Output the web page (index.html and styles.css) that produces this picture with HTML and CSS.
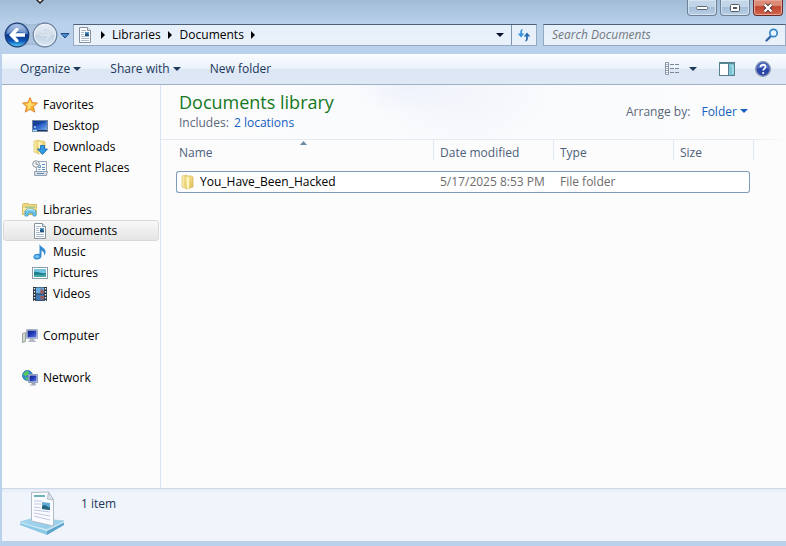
FILE: index.html
```
<!DOCTYPE html>
<html lang="en">
<head>
<meta charset="utf-8">
<title>Documents</title>
<link rel="stylesheet" href="styles.css">
</head>
<body>
<svg class="defs" aria-hidden="true">
  <defs>
    <linearGradient id="gold" x1="0" y1="0" x2="1" y2="1"><stop offset="0" stop-color="#fff3ad"/><stop offset="1" stop-color="#dfb950"/></linearGradient>
    <linearGradient id="screen" x1="0" y1="0" x2="1" y2="1"><stop offset="0" stop-color="#1c3f9e"/><stop offset=".5" stop-color="#2f62c8"/><stop offset="1" stop-color="#8fbdf0"/></linearGradient>
    <linearGradient id="dark" x1="0" y1="0" x2="1" y2="1"><stop offset="0" stop-color="#0c2c80"/><stop offset=".45" stop-color="#2036b4"/><stop offset="1" stop-color="#5f7fe0"/></linearGradient>
    <linearGradient id="orb" x1="0" y1="0" x2="0" y2="1"><stop offset="0" stop-color="#a9c4e6"/><stop offset=".45" stop-color="#2f62b4"/><stop offset=".5" stop-color="#0a3588"/><stop offset=".75" stop-color="#0f56b8"/><stop offset="1" stop-color="#55d4fa"/></linearGradient>
    <linearGradient id="orb-off" x1="0" y1="0" x2="0" y2="1"><stop offset="0" stop-color="#e6edf5"/><stop offset=".48" stop-color="#d3dfec"/><stop offset=".52" stop-color="#c2d2e4"/><stop offset="1" stop-color="#dbe7f4"/></linearGradient>
    <linearGradient id="tray" x1="0" y1="0" x2="1" y2="1"><stop offset="0" stop-color="#a5d8ef"/><stop offset="1" stop-color="#8fcbe8"/></linearGradient>
    <symbol id="doc" viewBox="0 0 16 16">
      <path d="M2.5.5h8l3 3v12h-11z" fill="#fff" stroke="#8792a0"/>
      <path d="M10.500.500v3h3" fill="#e6edf3" stroke="#8792a0"/>
      <path d="M4 3.500h5M4 5.500h3M4 7.500h3M4 9.500h8M4 11.500h8M4 13.500h8" stroke="#a9bbcf"/>
      <path d="M8 5h4v4H8z" fill="#5a9acb"/><path d="M8 7l2-1 2 2v1H8z" fill="#1f5585"/>
    </symbol>
    <symbol id="folder" viewBox="0 0 16 16">
      <path d="M2 2l5-1v14l-5-2z" fill="#f9eaa0" stroke="#e0c878" stroke-width=".8"/>
      <path d="M5 2h6l2 1v10l-6 2-2-2z" fill="url(#gold)" stroke="#dabb62" stroke-width=".8"/>
      <path d="M7 3v12l2-1V4z" fill="#fff6c4"/>
    </symbol>
  </defs>
</svg>

<div class="window">
  <header class="frame">
    <svg class="cursor" width="10" height="5" viewBox="0 0 10 5" aria-hidden="true"><path d="M1-1l4 4 4-4" fill="#fff" stroke="#222" stroke-width="1.5"/></svg>
    <div class="caption">
      <button class="cap" aria-label="Minimize"><svg width="12" height="6" viewBox="0 0 12 6"><rect x=".5" y="1.500" width="11" height="3" rx="1" fill="#fff" stroke="#5a6673"/></svg></button>
      <button class="cap" aria-label="Maximize"><svg width="12" height="10" viewBox="0 0 12 10"><rect x="1.500" y="1.500" width="9" height="7" rx="1" fill="#fff" stroke="#4e5965"/><rect x="4.500" y="4.500" width="3" height="1" fill="#9db3ca" stroke="#4e5965"/></svg></button>
      <button class="cap close" aria-label="Close"><svg width="12" height="10" viewBox="0 0 12 10"><path d="M2.500 1.500l7 7M9.500 1.500l-7 7" stroke="#5c3030" stroke-width="4"/><path d="M2.500 1.500l7 7M9.500 1.500l-7 7" stroke="#fff" stroke-width="2.400"/></svg></button>
    </div>
    <nav class="navbar" aria-label="Address">
      <div class="travel">
        <svg class="track" width="54" height="26" viewBox="0 0 54 26" aria-hidden="true"><path d="M12 1c9 0 9 2 15 2s8-2 14-2a12 12 0 0 1 0 24c-7 0-8-3-14-3s-8 3-15 3z" fill="#abc3de" stroke="#98b1cd"/></svg>
        <button aria-label="Back"><svg width="26" height="26" viewBox="0 0 26 26"><circle cx="13" cy="13" r="11.800" fill="url(#orb)" stroke="#1c3d73" stroke-width="1.200"/><path d="M3 12a10 9 0 0 1 20 0c-6-3-14-3-20 0z" fill="#fff" opacity=".25"/><path d="M5 13l7-7h2.500v2L11.500 11.200H21v3.600h-9.500l3 3.200v2H12z" fill="#fff"/></svg></button>
        <button aria-label="Forward" disabled><svg width="26" height="26" viewBox="0 0 26 26"><circle cx="13" cy="13" r="11.800" fill="url(#orb-off)" stroke="#6f839e" stroke-width="1.200"/><circle cx="13" cy="13" r="10.500" fill="none" stroke="#edf4fb"/><path d="M20 13l-6-6-2 1 3 3.500H7v3h8L12 18l2 1z" fill="#d8e3ef" stroke="#c3d2e3" stroke-width=".7"/></svg></button>
        <button aria-label="Recent pages"><svg width="10" height="7" viewBox="0 0 10 7"><path d="M1 1.500h8L5 6z" fill="#4d8ed0" stroke="#1d4a80"/></svg></button>
      </div>
      <div class="address">
        <svg width="16" height="16" aria-hidden="true"><use href="#doc"/></svg>
        <button class="sep" aria-label="Root"><i class="right"></i></button>
        <button>Libraries</button>
        <button class="sep" aria-label="Libraries menu"><i class="right"></i></button>
        <button>Documents</button>
        <button class="sep" aria-label="Documents menu"><i class="right"></i></button>
        <button class="history" aria-label="Previous locations"><i class="down"></i></button>
        <button class="refresh" aria-label="Refresh"><svg width="14" height="14" viewBox="0 0 14 14"><path d="M6 1C4 1 3 2.500 3.300 5.500H.8L4 9.500l3.300-4H5.200C5 3.500 5 2.500 6 1z" fill="#3793dc"/><path d="M8 13.500c2.300 0 3.300-1.500 2.800-5h2.500L10 4.500l-3.300 4H9c.2 2 .2 3.500-1 5z" fill="#286db4"/></svg></button>
      </div>
      <label class="search">
        <input type="text" placeholder="Search Documents" aria-label="Search Documents">
        <svg width="14" height="14" viewBox="0 0 14 14" aria-hidden="true"><path d="M6.500 7.500L1.500 12.500" stroke="#3666a6" stroke-width="2.400" stroke-linecap="round"/><circle cx="8.500" cy="5" r="3.700" fill="#e8f5ff" stroke="#3787c4" stroke-width="1.700"/></svg>
      </label>
    </nav>
  </header>

  <div class="toolbar">
    <button>Organize <i class="down"></i></button>
    <button>Share with <i class="down"></i></button>
    <button>New folder</button>
    <div class="tools">
      <button aria-label="Change your view"><svg width="16" height="14" viewBox="0 0 16 14"><path d="M1.500.5h3v12h-3zM1.500 4.500h3M1.500 8.500h3" fill="#fff" stroke="#8c96a3"/><path d="M2.500 2.500h1M2.500 6.500h1M2.500 10.500h1" stroke="#4c6bb0"/><path d="M6 2.500h10M6 6.500h10M6 10.500h10" stroke="#7c8794" stroke-dasharray="4 1"/></svg></button>
      <button class="more" aria-label="More options"><i class="down"></i></button>
      <button class="preview" aria-label="Show the preview pane"><svg width="16" height="14" viewBox="0 0 16 14"><rect x=".5" y=".5" width="15" height="13" fill="#fff" stroke="#55808f"/><path d="M1 1.500h14" stroke="#5a8796"/><path d="M10 2h5v11h-5z" fill="#7fc4d4"/><path d="M9.500 2v11" stroke="#55808f"/><path d="M12 3l2 2v7" stroke="#c4edf4" fill="none"/></svg></button>
      <button class="help" aria-label="Get help"><svg width="16" height="16" viewBox="0 0 16 16"><circle cx="8" cy="8" r="7.200" fill="#2845a8" stroke="#8291b3" stroke-width="1.500"/><path d="M2 8a6 6 0 0 1 12 0c-4-2-8-2-12 0z" fill="#6685d6" opacity=".7"/><path d="M5.500 6.200C5.500 3 10.700 3 10.500 6c-.1 1.700-2.300 1.600-2.300 3.600" fill="none" stroke="#fff" stroke-width="1.800"/><circle cx="8.200" cy="12" r="1.100" fill="#fff"/></svg></button>
    </div>
  </div>

  <div class="body">
    <nav class="sidebar" aria-label="Places">
      <ul>
        <li><a href="#"><svg width="16" height="16" viewBox="0 0 16 16"><path d="M8 .5l2.200 5 5.300.6-4 3.500 1.200 5.500L8 12.300l-4.700 2.800 1.200-5.500-4-3.500 5.300-.6z" fill="#fbb030" stroke="#dd812b" stroke-width=".9"/><path d="M8 2.500l1.300 4 4 .4-4 2L8 12 5 12.500 6 9 3 7l3.500-.5z" fill="#ffdc70"/></svg>Favorites</a></li>
        <li class="sub"><a href="#"><svg width="16" height="16" viewBox="0 0 16 16"><rect x=".5" y="2.500" width="15" height="11" fill="url(#screen)" stroke="#76889e"/><path d="M1 3h14L2 9H1z" fill="#0d368d" opacity=".55"/><path d="M1 12.500h14" stroke="#193661"/><path d="M1 12.500h4M2 9h2" stroke="#a4daff" stroke-width="1.400"/></svg>Desktop</a></li>
        <li class="sub"><a href="#"><svg width="16" height="16"><use href="#folder"/><path d="M8.500 6.500h4V10h3l-5 5.500-5-5.500h3z" fill="#319ae6" stroke="#1766ad" stroke-width=".8"/></svg>Downloads</a></li>
        <li class="sub"><a href="#"><svg width="16" height="16" viewBox="0 0 16 16"><path d="M4.500 1.500h10v10h-10z" fill="#f7fafc" stroke="#9aa8b5"/><path d="M2.500 11.500h13l-1 4h-12z" fill="#d8dfe6" stroke="#94a2b0"/><path d="M6.500 5.500h2v2h-2zM6.500 9.500h2M10 4.500h3M10 7.500h3M10 9.500h3M5 13.500h7" fill="none" stroke="#5f90c8"/><circle cx="4" cy="4" r="3.300" fill="#f5f6f7" stroke="#8b949d"/><path d="M4 2v2.300h2" fill="none" stroke="#667483" stroke-width=".8"/></svg>Recent Places</a></li>
      </ul>
      <ul>
        <li><a href="#"><svg width="16" height="16" viewBox="0 0 16 16"><path d="M.5 2.500l1-1h5l1 1h7v10H.5z" fill="#f0d882" stroke="#d8bb68"/><path d="M3 4.500h10v3H3z" fill="#a5c88a"/><path d="M1 6h14v6H1z" fill="url(#gold)"/><path d="M3 14V9l2-2h6l3 2v5h-3v-3H6v3z" fill="#69c4ec" stroke="#469bc8" stroke-width=".8"/><path d="M4 9l1.500-1.300h5L13 9.500" fill="none" stroke="#d8f5ff"/></svg>Libraries</a></li>
        <li class="sub current"><a href="#" aria-current="page"><svg width="16" height="16"><use href="#doc"/></svg>Documents</a></li>
        <li class="sub"><a href="#"><svg width="16" height="16" viewBox="0 0 16 16"><path d="M7.500 0c1 3 5.500 4 6 7 .3 2-.4 3.500-1.500 4.500.5-3-.5-4-2.500-5V12c0 2-2 3.500-4.500 3.500S1 14 1.500 12.200C2 10.500 4.500 9.500 7.500 10z" fill="#338bd2"/><ellipse cx="5" cy="12.500" rx="2.600" ry="1.500" fill="#6fc0f0"/></svg>Music</a></li>
        <li class="sub"><a href="#"><svg width="16" height="16" viewBox="0 0 16 16"><rect x=".5" y="2.500" width="15" height="11" fill="#fff" stroke="#8f9da9"/><path d="M2 4h12v8H2z" fill="#73c3e2"/><path d="M2 7c4-1 7 2 12 1v4H2z" fill="#207f8d"/><path d="M2 10c4-1 8 1 12-1v3H2z" fill="#43a7a3"/></svg>Pictures</a></li>
        <li class="sub"><a href="#"><svg width="16" height="16" viewBox="0 0 16 16"><path d="M1 1h14v14H1z" fill="#26323f"/><path d="M4 1.500h8v6H4z" fill="#69aee5"/><path d="M4 8.500h8v6H4z" fill="#4179b9"/><path d="M9 2l3 3v2.500H8zM8 10h4v3l-3 1z" fill="#985c60"/><path d="M2.500 2v13M13.500 2v13" stroke="#e7edf3" stroke-width="1.400" stroke-dasharray="1.500 1.500"/></svg>Videos</a></li>
      </ul>
      <ul>
        <li><a href="#"><svg width="16" height="16" viewBox="0 0 16 16"><path d="M.5 5.500l3-1v9l-3 1z" fill="#d0d9d1" stroke="#9aa59c"/><path d="M4.500 1.500h11v9h-11z" fill="#dce3ee" stroke="#a8b3c2"/><path d="M5.500 2.500h9v7h-9z" fill="url(#dark)"/><path d="M8 11h4l1 2H7z" fill="#aeb9c5"/><path d="M6 13.500h8" stroke="#b3bcc5"/></svg>Computer</a></li>
      </ul>
      <ul>
        <li><a href="#"><svg width="16" height="16" viewBox="0 0 16 16"><circle cx="5.500" cy="5.500" r="5" fill="#358bcc" stroke="#3a86b8"/><path d="M1 4l4-3 2 1-1 3-3 1zM3 7l3 1-1 3z" fill="#58cc54"/><path d="M6.500 4.500h9v8h-9z" fill="#d5def0" stroke="#8f9cba"/><path d="M7.500 5.500h7v6h-7z" fill="url(#dark)"/><path d="M10 13h3v1.500h-3zM8 15h6" fill="#8693a5" stroke="#a3aebb"/></svg>Network</a></li>
      </ul>
    </nav>

    <main class="content">
      <div class="library">
        <div>
          <h1>Documents library</h1>
          <p>Includes: <a href="#">2 locations</a></p>
        </div>
        <div class="arrange">Arrange by: <button>Folder <i class="down"></i></button></div>
      </div>
      <div class="listing">
        <table>
          <colgroup><col class="name"><col class="date"><col class="type"><col class="size"></colgroup>
          <thead><tr><th>Name<svg class="sort" width="7" height="4" viewBox="0 0 7 4" aria-hidden="true"><path d="M0 4l3.500-4L7 4z" fill="#6b8ba5"/></svg></th><th>Date modified</th><th>Type</th><th>Size</th></tr></thead>
          <tbody><tr><td><span class="file"><svg width="16" height="16" aria-hidden="true"><use href="#folder"/></svg>You_Have_Been_Hacked</span></td><td>5/17/2025 8:53 PM</td><td>File folder</td><td></td></tr></tbody>
        </table>
      </div>
    </main>
  </div>

  <footer class="details">
    <svg width="46" height="46" viewBox="0 0 46 46" aria-hidden="true">
      <path d="M0 31l14-4 30 3-17 8z" fill="url(#tray)" stroke="#a3d2e8"/>
      <path d="M0 31l27 8v5L0 34z" fill="#8cc8e5"/><path d="M27 39l17-8v3l-17 10z" fill="#5da3cb"/>
      <path d="M0 31.500l27 8 17-8.500" fill="none" stroke="#d3f1fc"/>
      <path d="M11.500 1.500l17-.5 5 8v26l-22-5z" fill="#fafcff" stroke="#b0bbc6"/>
      <path d="M28.500 1l-1 7 6 1z" fill="#dce5ed" stroke="#b0bbc6"/>
      <path d="M14 5l11 0" stroke="#6bb3b7" stroke-width="2"/>
      <path d="M14 10h8M14 13h7M14 16l7 1M14 19l16 2M14 22l16 3M14 25l16 4" stroke="#c0c6e2"/>
      <path d="M22 11l8 1v7l-8-1z" fill="#62aad3"/><path d="M22 15l3-1 5 3v2l-8-1z" fill="#26647f"/>
    </svg>
    <span>1 item</span>
  </footer>
</div>
</body>
</html>
```
FILE: styles.css
```
* { box-sizing: border-box; }

body {
  margin: 0;
  font: 12px/16px "Open Sans", "Noto Sans", sans-serif;
  color: #000;
  background: #b9d1ea;
}

button {
  padding: 0;
  border: 0;
  background: none;
  font: inherit;
  color: inherit;
  white-space: nowrap;
}

a { text-decoration: none; color: inherit; }
svg { display: block; flex: none; }
.defs { position: absolute; width: 0; height: 0; }

.down {
  display: inline-block;
  border: 4px solid transparent;
  border-top-color: currentColor;
  border-bottom: 0;
}

.right {
  border: 4px solid transparent;
  border-left-color: #000;
  border-right: 0;
}

.window {
  display: flex;
  flex-direction: column;
  min-height: 100vh;
  padding: 0 0 5px 2px;
}

/* Glass frame */
.frame {
  position: relative;
  margin-left: -2px;
  background: linear-gradient(#a1bbd6, #b9d1ea 24px);
}

.cursor { position: absolute; left: 35px; top: 0; }

.caption {
  display: flex;
  justify-content: flex-end;
  gap: 3px;
  height: 16px;
  padding-right: 3px;
}

.cap {
  display: flex;
  align-items: center;
  justify-content: center;
  width: 30px;
  border: 1px solid #6f8197;
  border-top: 0;
  border-radius: 0 0 4px 4px;
  box-shadow: inset 0 0 0 1px #d5e3f1;
  background: linear-gradient(#c3d5e8 45%, #a6bed8 50%, #b9cfe5);
}

.close {
  border-color: #6b2a24;
  box-shadow: inset 0 0 0 1px #e8a596;
  background: linear-gradient(#dc8b78 35%, #bf4630 45%, #d0654c);
}

.navbar {
  display: flex;
  align-items: center;
  padding: 6px 0 6px 4px;
}

.travel {
  position: relative;
  display: flex;
  align-items: center;
  gap: 2px;
  margin-right: 3px;
}

.travel .track { position: absolute; left: 0; top: 0; }
.travel button { position: relative; }

.address, .search {
  display: flex;
  align-items: center;
  height: 22px;
  border: 1px solid #94a9c2;
  border-top-color: #4c5f76;
  background: linear-gradient(#e6f0fa, #eaf1fa);
}

.address {
  flex: 1;
  padding-left: 3px;
  margin-right: 6px;
}

.address .sep {
  display: flex;
  justify-content: center;
  width: 19px;
}

.address .history { margin-left: auto; padding: 0 7px; color: #07102c; display: flex; }

.address .refresh {
  display: flex;
  align-items: center;
  justify-content: center;
  align-self: stretch;
  width: 25px;
  border-left: 1px solid #7f95af;
}

.search { width: 243px; padding: 0 6px 0 8px; }

.search input {
  flex: 1;
  min-width: 0;
  padding: 0;
  border: 0;
  outline: 0;
  background: none;
  font: inherit;
  font-style: italic;
}

.search input::placeholder { color: #72777d; opacity: 1; }

/* Command bar */
.toolbar {
  display: flex;
  align-items: center;
  gap: 29px;
  height: 31px;
  padding: 0 15px 0 18px;
  border-bottom: 1px solid #a0afc3;
  background: linear-gradient(#fbfdff, #e9f2fb 48%, #dce6f4 52%, #dfe9f6);
  color: #1e395b;
}

.toolbar > button .down { margin: 0 0 2px; }

.tools {
  display: flex;
  align-items: center;
  margin-left: auto;
}

.tools .more { display: flex; margin-left: 9px; }
.tools .preview { margin-left: 22px; }
.tools .help { margin-left: 20px; }

/* Panes */
.body {
  display: flex;
  flex: 1;
  background: #fcfcfc;
}

.sidebar {
  width: 159px;
  padding: 9px 1px 0;
  border-right: 1px solid #d6e5f5;
}

.sidebar ul {
  margin: 0 0 21px;
  padding: 0;
  list-style: none;
}

.sidebar a {
  display: flex;
  align-items: center;
  gap: 5px;
  height: 21px;
  padding-left: 18px;
  border: 1px solid transparent;
  border-radius: 3px;
}

.sidebar .sub a { padding-left: 28px; }

.sidebar .current a {
  border-color: #d9d9d9;
  background: linear-gradient(#f8f8f8, #e5e5e5);
}

.content { flex: 1; min-width: 0; }

.library {
  display: flex;
  justify-content: space-between;
  height: 54px;
  padding: 5px 38px 0 18px;
  background:
    radial-gradient(ellipse 60px 30px at 250px 0, #eef2fb, transparent),
    radial-gradient(ellipse 90px 50px at 300px 10px, #f3f5fb, transparent),
    linear-gradient(90deg, #fcfcfc, #f8fafd 50%, #fcfcfc);
  color: #5a6779;
}

.library h1 {
  margin: 0;
  font-size: 18px;
  font-weight: 400;
  line-height: 25px;
  color: #15781e;
}

.library p { margin: 0; }
.library a { margin-left: 2px; color: #1560bd; }
.arrange { padding-top: 14px; }
.arrange button { margin-left: 8px; color: #1560bd; }
.arrange .down { margin: 0 0 3px; }

.listing {
  padding-left: 15px;
  background: linear-gradient(90deg, #e5ebf3 95%, #fcfcfc) top / 100% 1px no-repeat;
}

table {
  width: 574px;
  table-layout: fixed;
  border-spacing: 0;
}

.name { width: 258px; }
.date, .type { width: 120px; }

th {
  position: relative;
  height: 32px;
  padding: 6px 6px 10px;
  font-weight: 400;
  text-align: left;
  color: #4c607a;
  background: linear-gradient(#dfe9f5, #dfe9f5) right top / 1px 21px no-repeat;
}

th:first-child, td:first-child { padding-left: 3px; }
th:last-child { background: none; }

th:last-child::after {
  content: "";
  position: absolute;
  top: 0;
  right: -4px;
  width: 1px;
  height: 21px;
  background: #dfe9f5;
}

.sort { position: absolute; left: 124px; top: 2px; }

td {
  height: 22px;
  padding: 0 6px;
  border: 1px solid #7f9db9;
  border-width: 1px 0;
  color: #6d6d6d;
  background: #fff;
}

td:first-child {
  border-left-width: 1px;
  border-radius: 3px 0 0 3px;
}

td:last-child {
  border-right-width: 1px;
  border-radius: 0 3px 3px 0;
}

.file {
  display: flex;
  align-items: center;
  gap: 4px;
  color: #000;
}

/* Details pane */
.details {
  display: flex;
  gap: 15px;
  height: 53px;
  padding: 2px 18px;
  border-top: 1px solid #cdd8e8;
  background: linear-gradient(#e6ecf7, #f0f4fb 4px, #f1f5fb);
  color: #1e395b;
}

.details span { padding-top: 5px; }
```
